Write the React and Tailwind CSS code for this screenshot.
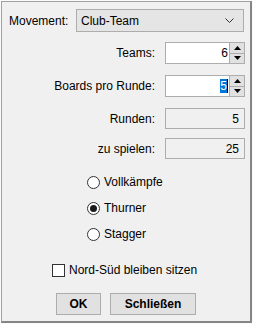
import React from "react";

function Spinner({ value, selected }) {
  return (
    <div className="flex w-[80px] h-[22px] border border-[#adadad] bg-white">
      <div className="flex-1 flex items-center justify-end pr-[1px]">
        {selected ? (
          <span className="bg-[#0078d7] text-white leading-[14px] border-r border-black">{value}</span>
        ) : (
          <span>{value}</span>
        )}
      </div>
      <div className="flex flex-col w-[15px] border-l border-[#adadad] bg-[#f0f0f0]">
        <div className="flex-1 flex items-center justify-center border-b border-[#adadad] bg-[#e1e1e1]">
          <svg width="7" height="4" viewBox="0 0 7 4">
            <polygon points="0,4 7,4 3.5,0" fill="#000" />
          </svg>
        </div>
        <div className="flex-1 flex items-center justify-center bg-[#e1e1e1]">
          <svg width="7" height="4" viewBox="0 0 7 4">
            <polygon points="0,0 7,0 3.5,4" fill="#000" />
          </svg>
        </div>
      </div>
    </div>
  );
}

function ReadOnly({ value }) {
  return (
    <div className="flex w-[80px] h-[21px] items-center justify-end pr-[5px] border border-[#adadad] bg-[#f0f0f0]">
      {value}
    </div>
  );
}

function Radio({ label, checked }) {
  return (
    <div className="flex items-center h-[16px]">
      <div className="w-[13px] h-[13px] rounded-full border border-[#333] bg-white flex items-center justify-center">
        {checked && <div className="w-[7px] h-[7px] rounded-full bg-[#1a1a1a]" />}
      </div>
      <span className="ml-[4px]">{label}</span>
    </div>
  );
}

export default function App() {
  return (
    <div className="w-[253px] h-[324px] bg-[#fafafa] overflow-hidden text-[12px] text-black" style={{ fontFamily: '"Liberation Sans", Arial, sans-serif' }}>
      <div className="ml-[1px] mt-[1px] w-[251px] h-[322px] bg-[#f0f0f0] border-l border-t border-[#a0a0a0] border-r-2 border-b-2 border-r-[#858585] border-b-[#858585] pl-[7px] pr-[5px] pt-[7px]">
        {/* Movement */}
        <div className="flex items-center">
          <span className="w-[67px]">Movement:</span>
          <div className="flex items-center w-[168px] h-[23px] border border-[#adadad] bg-[#e5e5e5] pl-[4px] pr-[9px]">
            <span className="flex-1">Club-Team</span>
            <svg width="9" height="5" viewBox="0 0 9 5">
              <polyline points="0.5,0.5 4.5,4.5 8.5,0.5" fill="none" stroke="#333" strokeWidth="1" />
            </svg>
          </div>
        </div>

        {/* Fields */}
        <div className="flex items-center justify-end gap-[10px] mt-[10px]">
          <span>Teams:</span>
          <Spinner value="6" />
        </div>
        <div className="flex items-center justify-end gap-[10px] mt-[11px]">
          <span>Boards pro Runde:</span>
          <Spinner value="5" selected />
        </div>
        <div className="flex items-center justify-end gap-[10px] mt-[11px]">
          <span>Runden:</span>
          <ReadOnly value="5" />
        </div>
        <div className="flex items-center justify-end gap-[10px] mt-[9px]">
          <span>zu spielen:</span>
          <ReadOnly value="25" />
        </div>

        {/* Radios */}
        <div className="flex flex-col gap-[10px] ml-[78px] mt-[15px]">
          <Radio label="Vollkämpfe" />
          <Radio label="Thurner" checked />
          <Radio label="Stagger" />
        </div>

        {/* Checkbox */}
        <div className="flex items-center h-[16px] ml-[43px] mt-[20px]">
          <div className="w-[13px] h-[13px] border border-[#333] bg-white" />
          <span className="ml-[4px]">Nord-Süd bleiben sitzen</span>
        </div>

        {/* Buttons */}
        <div className="flex gap-[9px] ml-[47px] mt-[15px] font-bold">
          <button className="w-[45px] h-[22px] border border-[#adadad] bg-[#e1e1e1]">OK</button>
          <button className="w-[86px] h-[22px] border border-[#adadad] bg-[#e1e1e1]">Schließen</button>
        </div>
      </div>
    </div>
  );
}
